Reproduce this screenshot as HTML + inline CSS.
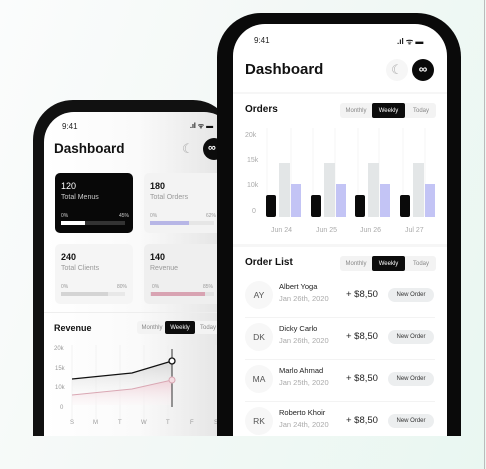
<!DOCTYPE html>
<html><head><meta charset="utf-8"><style>
*{margin:0;padding:0;box-sizing:border-box}
body{width:486px;height:469px;overflow:hidden;position:relative;font-family:"Liberation Sans",sans-serif;background:linear-gradient(110deg,#fbfcfc 0%,#f3f8f6 45%,#e9f7f1 100%)}
.a{position:absolute;white-space:nowrap}
.b{font-weight:bold;color:#111}
.g{color:#999}
.tabs{position:absolute;background:#f3f3f3;border-radius:3px;font-size:6px;color:#888}
.tabs span{position:absolute;top:0;height:100%;display:flex;align-items:center;justify-content:center}
.tabs .on{background:#0c0c0c;color:#fff;border-radius:2px}
</style></head><body>
<div class="a" style="left:484px;top:0;width:1px;height:469px;background:#bbb"></div>

<!-- back phone -->
<div class="a" style="left:33px;top:100px;width:200px;height:336px;background:#111;border-radius:40px 40px 0 0"></div>
<div class="a" style="left:44px;top:112px;width:190px;height:324px;background:linear-gradient(90deg,#fff 0%,#fafafa 50%,#e2e2e2 100%);border-radius:30px 30px 0 0;overflow:hidden">
  <div class="a" style="left:18px;top:10px;font-size:8px;color:#222">9:41</div>
  <div class="a" style="left:146px;top:10px;font-size:7px;color:#111;font-weight:bold">.ıl ᯤ ▬</div>
  <div class="a b" style="left:10px;top:29px;font-size:13.5px">Dashboard</div>
  <div class="a" style="left:138px;top:29px;font-size:13px;color:#aaa">☾</div>
  <div class="a" style="left:159px;top:26px;width:22px;height:22px;border-radius:50%;background:#0c0c0c;color:#fff;font-size:11px;line-height:21px;padding-left:5px;font-weight:bold">∞</div>
  <div class="a" style="left:11px;top:61px;width:78px;height:60px;background:#080808;border-radius:5px;color:#fff">
    <div class="a" style="left:6px;top:8px;font-size:9px">120</div>
    <div class="a" style="left:6px;top:21px;font-size:7px;color:#ccc">Total Menus</div>
    <div class="a" style="left:6px;top:40px;font-size:5px;color:#ccc">0%</div>
    <div class="a" style="left:64px;top:40px;font-size:5px;color:#ccc">45%</div>
    <div class="a" style="left:6px;top:48px;width:64px;height:4px;background:#333"></div>
    <div class="a" style="left:6px;top:48px;width:24px;height:4px;background:#fff"></div>
  </div>
  <div class="a" style="left:100px;top:61px;width:90px;height:60px;background:#f3f3f3;border-radius:5px">
    <div class="a b" style="left:6px;top:8px;font-size:9px">180</div>
    <div class="a g" style="left:6px;top:21px;font-size:7px">Total Orders</div>
    <div class="a g" style="left:6px;top:40px;font-size:5px">0%</div>
    <div class="a g" style="left:62px;top:40px;font-size:5px">62%</div>
    <div class="a" style="left:6px;top:48px;width:64px;height:4px;background:#e6e6e6"></div>
    <div class="a" style="left:6px;top:48px;width:39px;height:4px;background:#b7b6e6"></div>
  </div>
  <div class="a" style="left:11px;top:132px;width:78px;height:60px;background:#f5f5f5;border-radius:5px">
    <div class="a b" style="left:6px;top:8px;font-size:9px">240</div>
    <div class="a g" style="left:6px;top:21px;font-size:7px">Total Clients</div>
    <div class="a g" style="left:6px;top:40px;font-size:5px">0%</div>
    <div class="a g" style="left:62px;top:40px;font-size:5px">80%</div>
    <div class="a" style="left:6px;top:48px;width:64px;height:4px;background:#e8e8e8"></div>
    <div class="a" style="left:6px;top:48px;width:47px;height:4px;background:#d4d4d4"></div>
  </div>
  <div class="a" style="left:100px;top:132px;width:90px;height:60px;background:#efefef;border-radius:5px">
    <div class="a b" style="left:6px;top:8px;font-size:9px">140</div>
    <div class="a g" style="left:6px;top:21px;font-size:7px">Revenue</div>
    <div class="a g" style="left:8px;top:40px;font-size:5px">0%</div>
    <div class="a g" style="left:59px;top:40px;font-size:5px">85%</div>
    <div class="a" style="left:6px;top:48px;width:64px;height:4px;background:#e2e2e2"></div>
    <div class="a" style="left:7px;top:48px;width:54px;height:4px;background:#d8a3b2"></div>
  </div>
  <div class="a" style="left:0;top:200px;width:190px;height:1px;background:#eee"></div>
  <div class="a b" style="left:10px;top:211px;font-size:9px">Revenue</div>
  <div class="tabs" style="left:93px;top:209px;width:90px;height:13px"><span style="left:2px;width:26px">Monthly</span><span class="on" style="left:28px;width:30px">Weekly</span><span style="left:59px;width:24px">Today</span></div>
  <svg class="a" style="left:0;top:225px" width="190" height="90">
    <defs><linearGradient id="gg" x1="0" y1="0" x2="0" y2="1"><stop offset="0" stop-color="#d8d8d8"/><stop offset="1" stop-color="#fafafa" stop-opacity="0"/></linearGradient>
    <linearGradient id="pg" x1="0" y1="0" x2="0" y2="1"><stop offset="0" stop-color="#f0d2d9"/><stop offset="1" stop-color="#fbf3f5" stop-opacity="0.3"/></linearGradient></defs>
    <g stroke="#eee" stroke-width="0.7"><line x1="28" y1="8" x2="28" y2="82"/><line x1="52" y1="8" x2="52" y2="82"/><line x1="76" y1="8" x2="76" y2="82"/><line x1="100" y1="8" x2="100" y2="82"/><line x1="124" y1="8" x2="124" y2="82"/><line x1="148" y1="8" x2="148" y2="82"/><line x1="172" y1="8" x2="172" y2="82"/></g>
    <path d="M28 42 L88 36 L128 24 L128 68 L28 68Z" fill="url(#gg)"/>
    <path d="M28 58 L88 52 L128 43 L128 68 L28 68Z" fill="url(#pg)"/>
    <path d="M28 42 L88 36 L128 24" fill="none" stroke="#111" stroke-width="1.2"/>
    <path d="M28 58 L88 52 L128 43" fill="none" stroke="#d9a7b3" stroke-width="1"/>
    <line x1="128" y1="12" x2="128" y2="70" stroke="#333" stroke-width="1"/>
    <circle cx="128" cy="24" r="3" fill="#fff" stroke="#111" stroke-width="1.3"/>
    <circle cx="128" cy="43" r="3" fill="#f4dde2" stroke="#d9a7b3"/>
    <g font-size="6" fill="#999" font-family="Liberation Sans"><text x="10" y="13">20k</text><text x="11" y="33">15k</text><text x="11" y="52">10k</text><text x="16" y="72">0</text>
    <text x="26" y="87">S</text><text x="49" y="87">M</text><text x="74" y="87">T</text><text x="97" y="87">W</text><text x="122" y="87">T</text><text x="146" y="87">F</text><text x="170" y="87">S</text></g>
  </svg>
</div>

<!-- front phone -->
<div class="a" style="left:217px;top:13px;width:244px;height:423px;background:#0a0a0a;border-radius:44px 44px 0 0"></div>
<div class="a" style="left:233px;top:24px;width:214px;height:412px;background:#fff;border-radius:32px 32px 0 0;overflow:hidden">
  <div class="a" style="left:21px;top:12px;font-size:8px;color:#222">9:41</div>
  <div class="a" style="left:164px;top:12px;font-size:8px;color:#111;font-weight:bold">.ıl ᯤ ▬</div>
  <div class="a b" style="left:12px;top:37px;font-size:15px">Dashboard</div>
  <div class="a" style="left:153px;top:35px;width:22px;height:22px;border-radius:50%;background:#f6f6f6;color:#aaa;font-size:13px;text-align:center;line-height:22px">☾</div>
  <div class="a" style="left:179px;top:35px;width:22px;height:22px;border-radius:50%;background:#0a0a0a;color:#fff;font-size:12px;text-align:center;line-height:21px;font-weight:bold">∞</div>
  <div class="a" style="left:0;top:68px;width:214px;height:2px;background:#f6f6f6"></div>
  <div class="a b" style="left:12px;top:80px;font-size:10px">Orders</div>
  <div class="tabs" style="left:107px;top:79px;width:96px;height:15px"><span style="left:0;width:32px">Monthly</span><span class="on" style="left:32px;width:33px">Weekly</span><span style="left:66px;width:30px">Today</span></div>
  <svg class="a" style="left:0;top:100px" width="214" height="112">
    <g stroke="#f0f0f0" stroke-width="0.7"><line x1="34" y1="4" x2="34" y2="92"/><line x1="58" y1="4" x2="58" y2="92"/><line x1="80" y1="4" x2="80" y2="92"/><line x1="102" y1="4" x2="102" y2="92"/><line x1="125" y1="4" x2="125" y2="92"/><line x1="146" y1="4" x2="146" y2="92"/><line x1="170" y1="4" x2="170" y2="92"/><line x1="192" y1="4" x2="192" y2="92"/></g>
    <g font-size="7" fill="#aaa" font-family="Liberation Sans"><text x="12" y="13">20k</text><text x="14" y="38">15k</text><text x="14" y="63">10k</text><text x="19" y="89">0</text>
    <text x="38" y="108">Jun 24</text><text x="83" y="108">Jun 25</text><text x="127" y="108">Jun 26</text><text x="172" y="108">Jul 27</text></g>
    <g>
      <rect x="33" y="71" width="10" height="22" rx="2" fill="#0a0a0a"/><rect x="46" y="39" width="11" height="54" fill="#e3e6e7"/><rect x="58" y="60" width="10" height="33" fill="#c3c4f5"/>
      <rect x="78" y="71" width="10" height="22" rx="2" fill="#0a0a0a"/><rect x="91" y="39" width="11" height="54" fill="#e3e6e7"/><rect x="103" y="60" width="10" height="33" fill="#c3c4f5"/>
      <rect x="122" y="71" width="10" height="22" rx="2" fill="#0a0a0a"/><rect x="135" y="39" width="11" height="54" fill="#e3e6e7"/><rect x="147" y="60" width="10" height="33" fill="#c3c4f5"/>
      <rect x="167" y="71" width="10" height="22" rx="2" fill="#0a0a0a"/><rect x="180" y="39" width="11" height="54" fill="#e3e6e7"/><rect x="192" y="60" width="10" height="33" fill="#c3c4f5"/>
    </g>
  </svg>
  <div class="a" style="left:0;top:220px;width:214px;height:3px;background:#f6f6f6"></div>
  <div class="a b" style="left:12px;top:233px;font-size:10px">Order List</div>
  <div class="tabs" style="left:107px;top:232px;width:96px;height:15px"><span style="left:0;width:32px">Monthly</span><span class="on" style="left:32px;width:33px">Weekly</span><span style="left:66px;width:30px">Today</span></div>
  <div class="a" style="left:0;top:255px;width:214px">
    <div class="a" style="left:12px;top:2px;width:28px;height:28px;border-radius:50%;background:#f7f7f7;font-size:8.5px;color:#555;text-align:center;line-height:28px">AY</div>
    <div class="a" style="left:46px;top:3px;font-size:7.5px;color:#222">Albert Yoga</div>
    <div class="a" style="left:46px;top:15px;font-size:7.5px;color:#aaa">Jan 26th, 2020</div>
    <div class="a" style="left:113px;top:10px;font-size:9.5px;color:#222">+ $8,50</div>
    <div class="a" style="left:155px;top:9px;width:46px;height:14px;border-radius:7px;background:#eceeef;font-size:6px;color:#333;text-align:center;line-height:14px">New Order</div>
  </div>
  <div class="a" style="left:12px;top:293px;width:190px;height:1px;background:#f3f3f3"></div>
  <div class="a" style="left:0;top:297px;width:214px">
    <div class="a" style="left:12px;top:2px;width:28px;height:28px;border-radius:50%;background:#f7f7f7;font-size:8.5px;color:#555;text-align:center;line-height:28px">DK</div>
    <div class="a" style="left:46px;top:3px;font-size:7.5px;color:#222">Dicky Carlo</div>
    <div class="a" style="left:46px;top:15px;font-size:7.5px;color:#aaa">Jan 26th, 2020</div>
    <div class="a" style="left:113px;top:10px;font-size:9.5px;color:#222">+ $8,50</div>
    <div class="a" style="left:155px;top:9px;width:46px;height:14px;border-radius:7px;background:#eceeef;font-size:6px;color:#333;text-align:center;line-height:14px">New Order</div>
  </div>
  <div class="a" style="left:12px;top:335px;width:190px;height:1px;background:#f3f3f3"></div>
  <div class="a" style="left:0;top:339px;width:214px">
    <div class="a" style="left:12px;top:2px;width:28px;height:28px;border-radius:50%;background:#f7f7f7;font-size:8.5px;color:#555;text-align:center;line-height:28px">MA</div>
    <div class="a" style="left:46px;top:3px;font-size:7.5px;color:#222">Marlo Ahmad</div>
    <div class="a" style="left:46px;top:15px;font-size:7.5px;color:#aaa">Jan 25th, 2020</div>
    <div class="a" style="left:113px;top:10px;font-size:9.5px;color:#222">+ $8,50</div>
    <div class="a" style="left:155px;top:9px;width:46px;height:14px;border-radius:7px;background:#eceeef;font-size:6px;color:#333;text-align:center;line-height:14px">New Order</div>
  </div>
  <div class="a" style="left:12px;top:377px;width:190px;height:1px;background:#f3f3f3"></div>
  <div class="a" style="left:0;top:381px;width:214px">
    <div class="a" style="left:12px;top:2px;width:28px;height:28px;border-radius:50%;background:#f7f7f7;font-size:8.5px;color:#555;text-align:center;line-height:28px">RK</div>
    <div class="a" style="left:46px;top:3px;font-size:7.5px;color:#222">Roberto Khoir</div>
    <div class="a" style="left:46px;top:15px;font-size:7.5px;color:#aaa">Jan 24th, 2020</div>
    <div class="a" style="left:113px;top:10px;font-size:9.5px;color:#222">+ $8,50</div>
    <div class="a" style="left:155px;top:9px;width:46px;height:14px;border-radius:7px;background:#eceeef;font-size:6px;color:#333;text-align:center;line-height:14px">New Order</div>
  </div>
</div>
</body></html>
